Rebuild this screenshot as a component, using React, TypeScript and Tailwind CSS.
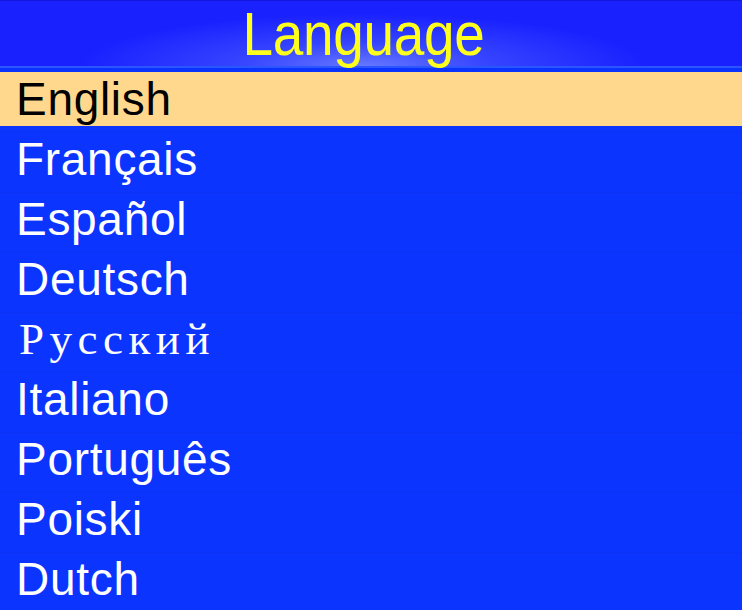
import React from "react";

const languages = [
  "English",
  "Français",
  "Español",
  "Deutsch",
  "Русский",
  "Italiano",
  "Português",
  "Poiski",
  "Dutch",
];

export default function App() {
  return (
    <div className="w-[742px] h-[610px] overflow-hidden bg-[#0b34ff] flex flex-col font-['Liberation_Sans',Arial,sans-serif]">
      <div className="h-[66px] shrink-0 flex items-center justify-center pr-[14px] bg-[radial-gradient(ellipse_38%_80%_at_49%_100%,#6677ff_0%,#3544ff_45%,#1a21ff_100%)] border-t border-[#1418d8]">
        <h1 className="text-[61px] leading-none text-[#ffff1e] scale-x-[0.9] tracking-[-0.3px] mt-[1px]">
          Language
        </h1>
      </div>
      <div className="h-[2px] shrink-0 bg-[#2a55ff]" />
      <div className="h-[4px] shrink-0 bg-[#0a33ff]" />
      <ul className="flex flex-col">
        {languages.map((lang, i) => (
          <li
            key={lang}
            className={
              i === 0
                ? "h-[54px] mb-[6px] bg-[#ffd88e] text-black flex items-center pl-[16px]"
                : "h-[60px] shrink-0 pb-[8px] border-t border-[#0d32f6] text-white flex items-center pl-[16px]"
            }
          >
            {lang === "Русский" ? (
              <span className="text-[45px] leading-none pl-[3px] mt-[2px] tracking-[5.5px] font-['Liberation_Serif','Times_New_Roman',serif]">
                {lang}
              </span>
            ) : (
              <span className="text-[46px] leading-none tracking-[0.7px]">{lang}</span>
            )}
          </li>
        ))}
      </ul>
    </div>
  );
}
